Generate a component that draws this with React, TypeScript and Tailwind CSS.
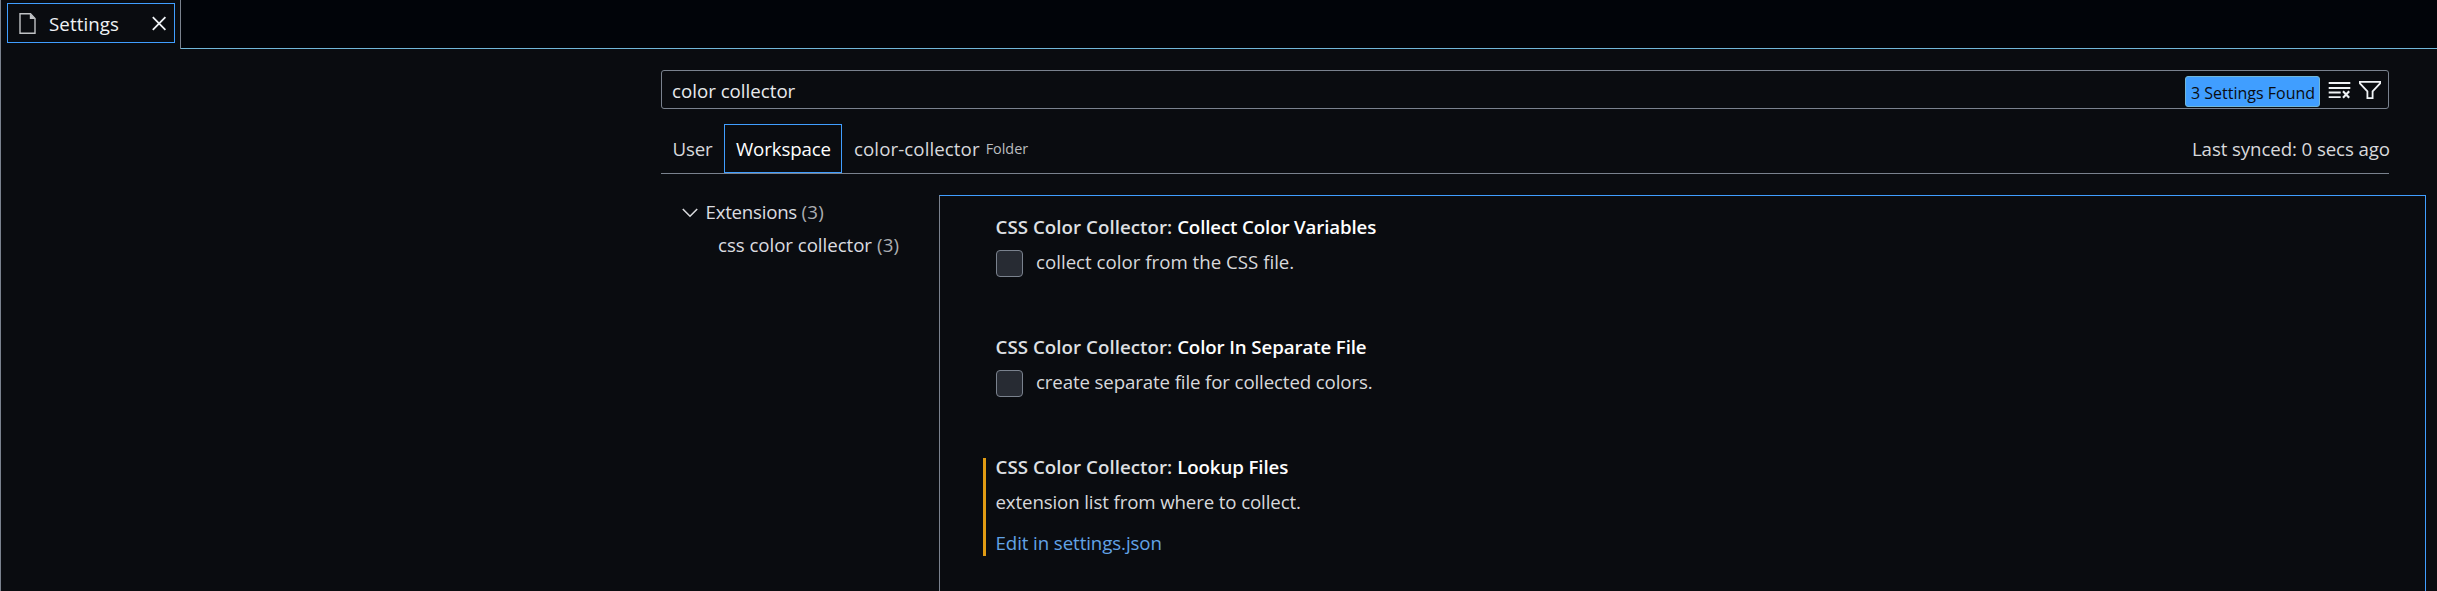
import type { ReactNode } from 'react';

function FileIcon() {
  return (
    <svg className="mt-[9px] ml-[11px] h-[21px] w-[17px] shrink-0" viewBox="0 0 17 21" fill="none">
      <path d="M1 0.8H11.5L16 5.5V20.2H1Z" stroke="#c0c2c5" strokeWidth="1.4" />
      <path d="M10.8 0.5V6H16.4Z" fill="#c0c2c5" />
    </svg>
  );
}

function CloseIcon() {
  return (
    <svg className="mt-[12px] h-[15px] w-[15px] shrink-0" viewBox="0 0 15 15" fill="none" stroke="#f0f3f6" strokeWidth="1.8">
      <path d="M0.8 1.2L13.4 13.8M13.4 1.2L0.8 13.8" />
    </svg>
  );
}

function ClearIcon() {
  return (
    <svg className="h-[18px] w-[23px] shrink-0" viewBox="0 0 23 18" fill="none" stroke="#f0f3f6">
      <path d="M0.7 2H22.3M0.7 7H22.3M0.7 11.5H12.7M0.7 16.2H12.7" strokeWidth="1.8" />
      <path d="M15 10.2L21.2 16.8M21.2 10.2L15 16.8" strokeWidth="2.1" />
    </svg>
  );
}

function FilterIcon() {
  return (
    <svg className="h-[18px] w-[22px] shrink-0" viewBox="0 0 22 18" fill="none" stroke="#f0f3f6" strokeWidth="1.8">
      <path d="M0.9 0.9H21.1V2.4L13.6 10.3V17.1H8.4V10.3L0.9 2.4Z" />
    </svg>
  );
}

function Title({ name, spacing }: { name: string; spacing: string }) {
  return (
    <div className="h-7 font-semibold leading-7 whitespace-pre">
      <span className="tracking-[0.05px] text-[#dfe0e3]">CSS Color Collector: </span>
      <span className={`text-white ${spacing}`}>{name}</span>
    </div>
  );
}

function CheckSetting({ name, spacing, children }: { name: string; spacing: string; children: ReactNode }) {
  return (
    <div className="h-[120px] pl-[55.5px]">
      <Title name={name} spacing={spacing} />
      <div className="mt-[9px] flex">
        <div className="h-[27px] w-[27px] rounded-[4px] border border-[#7a828e] bg-[#272b33]" />
        <div className="-mt-[2px] ml-[13.5px] h-7 leading-7 whitespace-nowrap">{children}</div>
      </div>
    </div>
  );
}

export default function App() {
  return (
    <div className="flex h-[591px] w-[2437px] flex-col overflow-hidden border-l border-[#7a828e] bg-[#0a0c10] font-['Open_Sans','Noto_Sans',sans-serif] text-[18.7px] text-[#d8d9dc]">
      <div className="flex h-[49px] shrink-0">
        <div className="flex w-[179px] pt-[3px] pl-[6px]">
          <div className="flex h-[40px] w-[168px] border border-[#409eff]">
            <FileIcon />
            <span className="ml-[13px] w-[103px] pt-[6px] leading-7 tracking-[0.1px] text-[#f0f3f6]">Settings</span>
            <CloseIcon />
          </div>
        </div>
        <div className="w-px bg-[#7a828e]" />
        <div className="flex-1 border-b border-[#71b7d9] bg-[#010409]" />
      </div>

      <div className="ml-[660px] w-[1728px] shrink-0 pt-[21px]">
        <div className="flex h-[39px] items-start rounded-[3px] border border-[#7a828e]">
          <span className="ml-[10px] flex-1 pt-[6px] leading-7 text-[#e8eaed]">color collector</span>
          <div className="mt-[5px] h-[31px] w-[135px] rounded-[3px] border border-[#71b7d9] bg-[#409eff] pl-[5px] text-[16px] leading-[33px] whitespace-nowrap text-[#0a0c10]">
            3 Settings Found
          </div>
          <div className="mt-[10px] ml-[8px] flex gap-[8px] pr-[7px]">
            <ClearIcon />
            <FilterIcon />
          </div>
        </div>
        <div className="mt-[15px] flex h-[50px] border-b border-[#7a828e]">
          <span className="w-[63px] pt-[11px] pl-[11.5px] leading-7 tracking-[-0.2px]">User</span>
          <div className="h-[49px] w-[118px] border border-[#409eff] pt-[10px] pl-[11px] leading-7 tracking-[-0.13px] text-white">
            Workspace
          </div>
          <span className="ml-[12px] pt-[11px] leading-7 tracking-[0.08px]">color-collector</span>
          <span className="ml-[6px] flex-1 pt-[11px] text-[14.4px] leading-7 text-[#babcbf]">Folder</span>
          <span className="-mr-px pt-[11px] leading-7 tracking-[-0.1px]">Last synced: 0 secs ago</span>
        </div>
      </div>

      <div className="mt-[21px] flex flex-1">
        <div className="w-[938px] pt-[3px]">
          <div className="flex h-[33px] pl-[681px] leading-7">
            <svg className="mt-[10px] h-[10px] w-[16px]" viewBox="0 0 16 10" fill="none" stroke="#d8d9dc" strokeWidth="1.6">
              <path d="M0.8 1L8 8.2L15.2 1" />
            </svg>
            <span className="ml-[7.5px] tracking-[-0.25px] text-[#dcdde0]">Extensions</span>
            <span className="ml-[4.5px] tracking-[0.3px] text-[#acaeb1]">(3)</span>
          </div>
          <div className="flex h-7 pl-[717px] leading-7">
            <span className="tracking-[-0.05px] text-[#dcdde0]">css color collector</span>
            <span className="ml-[5px] tracking-[0.2px] text-[#acaeb1]">(3)</span>
          </div>
        </div>
        <div className="flex w-[1487px] flex-col border-t border-r border-l border-t-[#409eff] border-r-[#409eff] border-l-[#7a828e] pt-[17px]">
          <CheckSetting name="Collect Color Variables" spacing="tracking-[-0.13px]">
            collect color from the CSS file.
          </CheckSetting>
          <CheckSetting name="Color In Separate File" spacing="tracking-[-0.11px]">
            <span className="tracking-[-0.13px]">create separate file for collected colors.</span>
          </CheckSetting>
          <div className="mt-[5px] ml-[43px] h-[98px] border-l-[3px] border-[#e09b13] pl-[9.5px]">
            <div className="-mt-[5px]">
              <Title name="Lookup Files" spacing="tracking-[-0.1px]" />
            </div>
            <div className="mt-[7px] h-7 leading-7 tracking-[-0.13px]">extension list from where to collect.</div>
            <div className="mt-[13px] h-7 leading-7 tracking-[-0.09px] text-[#62a3e6]">Edit in settings.json</div>
          </div>
        </div>
      </div>
    </div>
  );
}
